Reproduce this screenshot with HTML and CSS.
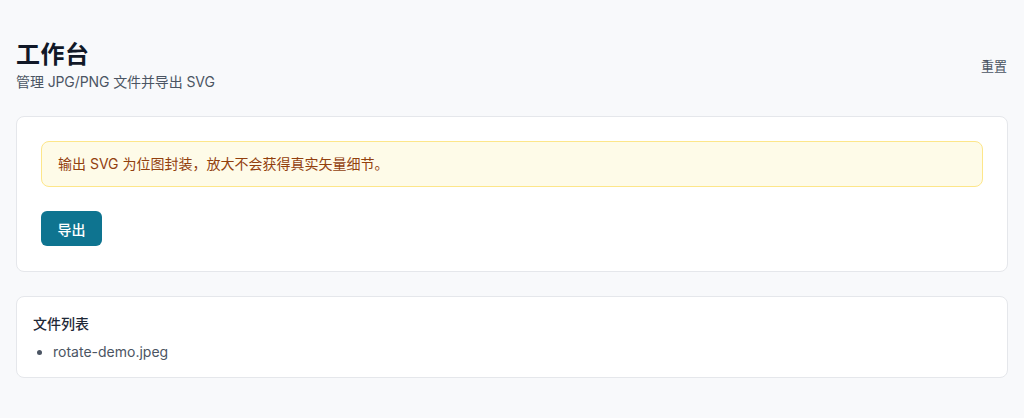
FILE: index.html
```html
<!DOCTYPE html>
<html lang="zh-CN">
<head>
<meta charset="utf-8">
<title>工作台</title>
<link rel="stylesheet" href="styles.css">
</head>
<body>
<main class="page">
  <header class="header">
    <div class="heading">
      <h1 class="title">工作台</h1>
      <p class="subtitle">管理 JPG/PNG 文件并导出 SVG</p>
    </div>
    <button class="reset" type="button">重置</button>
  </header>
  <section class="card card-main">
    <div class="alert">输出 SVG 为位图封装，放大不会获得真实矢量细节。</div>
    <button class="btn-primary" type="button">导出</button>
  </section>
  <section class="card card-files">
    <h2 class="card-title">文件列表</h2>
    <ul class="file-list">
      <li>rotate-demo.jpeg</li>
    </ul>
  </section>
</main>
</body>
</html>
```

FILE: styles.css
```css
* { box-sizing: border-box; }
html, body {
  margin: 0;
  background: #f8f9fb;
  font-family: "Inter", "Noto Sans CJK SC", "Noto Sans", sans-serif;
  color: #111827;
}
.page {
  padding: 40px 16px 16px;
  display: flex;
  flex-direction: column;
  gap: 24px;
}
.header {
  display: flex;
  align-items: center;
  justify-content: space-between;
}
.title {
  margin: 0;
  font-size: 24px;
  line-height: 30px;
  font-weight: 700;
  letter-spacing: 0.5px;
  color: #111827;
}
.subtitle {
  margin: 2px 0 0;
  font-size: 14px;
  line-height: 20px;
  letter-spacing: -0.1px;
  color: #4b5563;
}
.reset {
  background: none;
  border: none;
  padding: 2px 0 4px;
  margin-right: 1px;
  font: inherit;
  font-size: 13px;
  color: #4b5563;
  cursor: pointer;
}
.card {
  background: #fff;
  border: 1px solid #e5e7eb;
  border-radius: 8px;
}
.card-main {
  padding: 24px 24px 25px;
  display: flex;
  flex-direction: column;
  align-items: flex-start;
  gap: 24px;
}
.alert {
  align-self: stretch;
  background: #fefbe8;
  border: 1px solid #fde68a;
  border-radius: 8px;
  padding: 12px 16px;
  font-size: 14px;
  line-height: 20px;
  color: #92400e;
}
.btn-primary {
  background: #0e7490;
  color: #fff;
  border: none;
  border-radius: 6px;
  height: 35px;
  width: 61px;
  padding: 0;
  font: inherit;
  font-size: 14px;
  font-weight: 500;
  cursor: pointer;
}
.card-files {
  padding: 16px 16px 14px;
}
.card-title {
  margin: 0 0 6px;
  font-size: 14px;
  line-height: 22px;
  font-weight: 500;
  color: #1f2937;
}
.file-list {
  margin: 0;
  padding-left: 20px;
  font-size: 14px;
  line-height: 22px;
  color: #4b5563;
}
```
